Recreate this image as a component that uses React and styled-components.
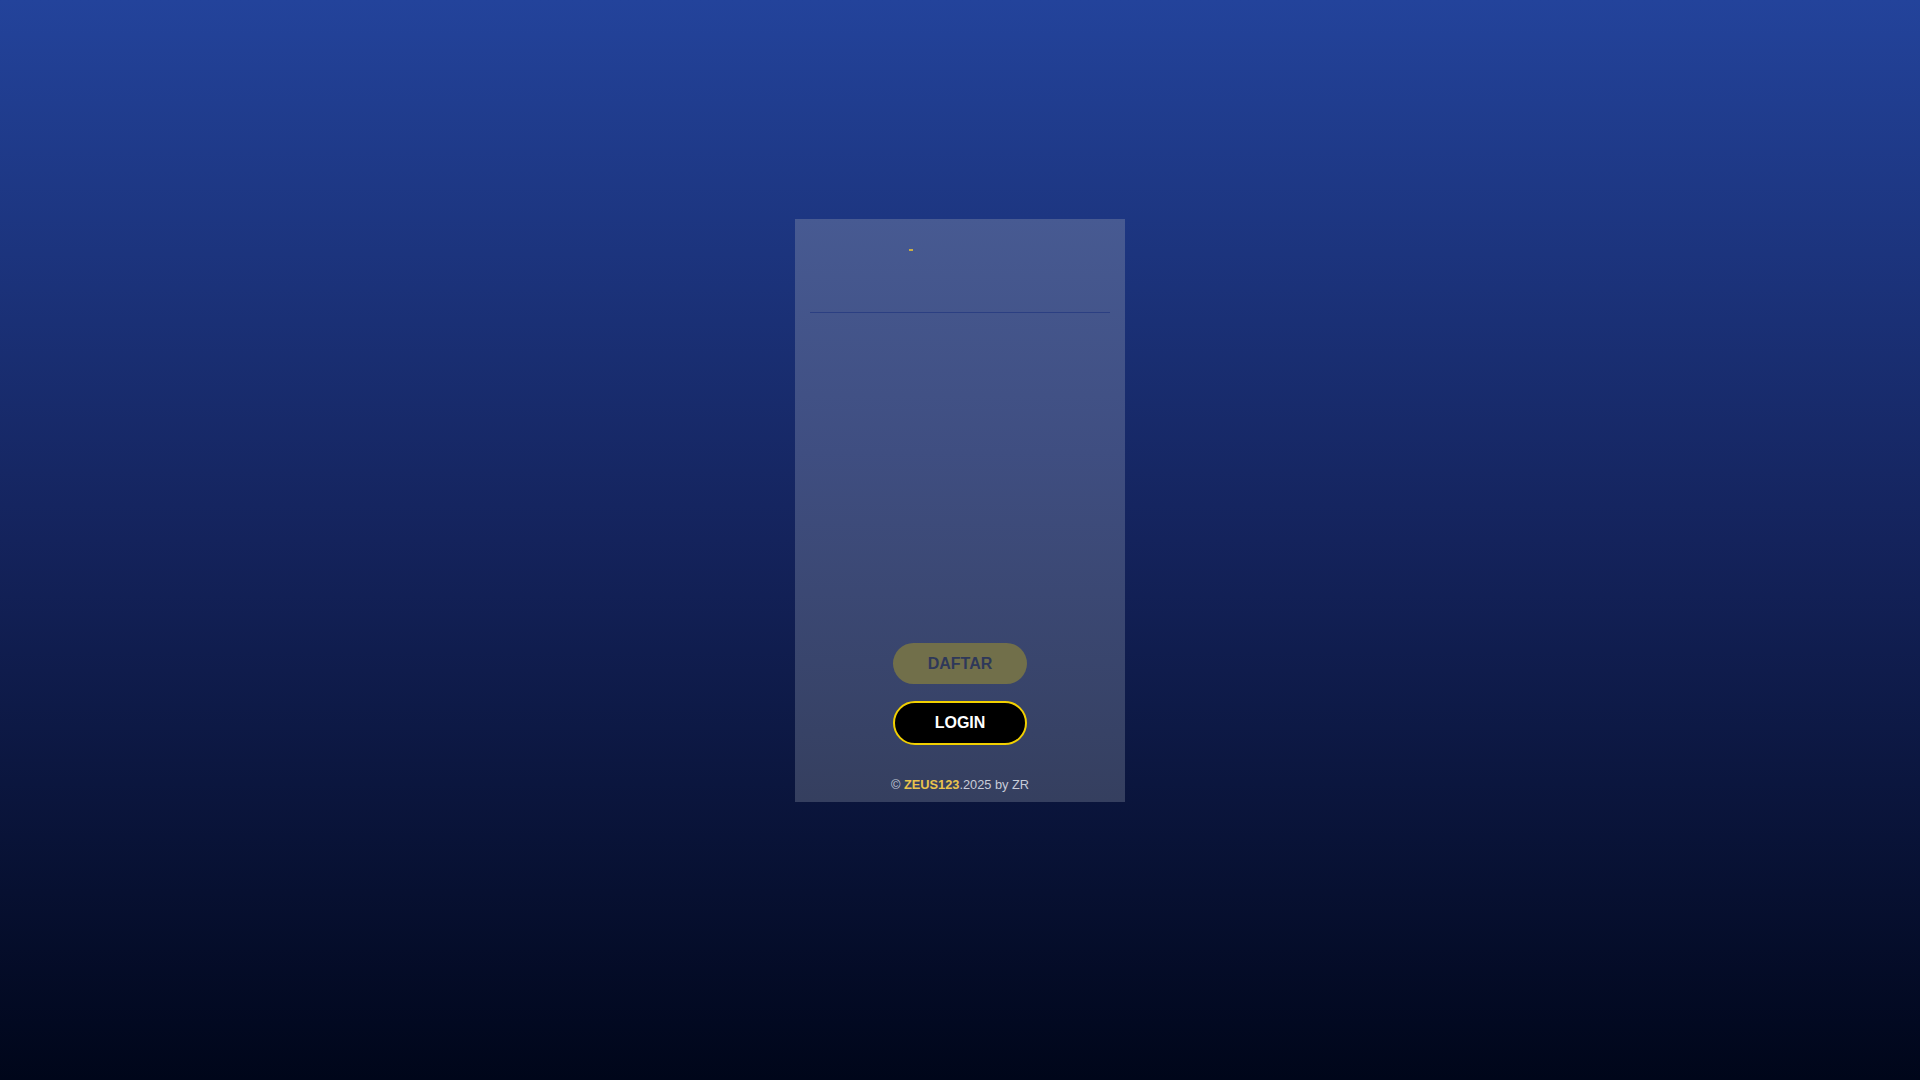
import React from 'react'
import styled, { createGlobalStyle } from 'styled-components';

const GlobalStyle = createGlobalStyle`
    html, body {
        margin: 0;
        padding: 0;
        height: 100%;
    }
    body {
        font-family: "Liberation Sans", Arial, sans-serif;
        background: linear-gradient(180deg, #23439b 0%, #14235c 50%, #00061a 100%);
        min-height: 1080px;
    }
`;

const Page = styled.div`
    display: flex;
    justify-content: center;
    padding-top: 219px;
`;

// main card
const Card = styled.div`
    width: 330px;
    height: 583px;
    box-sizing: border-box;
    padding: 0 15px;
    display: flex;
    flex-direction: column;
    background: linear-gradient(180deg, #475a92 0%, #3f4e81 40%, #353f5f 100%);
`;

// card > header with the logo
const Header = styled.div`
    height: 94px;
    box-sizing: border-box;
    border-bottom: 1px solid #2b3f82;
    padding: 30px 0 0 99px;
`;

const LogoTick = styled.span`
    display: block;
    width: 4px;
    height: 2px;
    background: #c9ad45;
`;

const Banner = styled.div`
    flex: 1;
`;

const Buttons = styled.div`
    display: flex;
    flex-direction: column;
    align-items: center;
    gap: 17px;
`;

const Button = styled.a`
    width: 134px;
    height: ${props => props.$outlined ? '44px' : '41px'};
    box-sizing: border-box;
    border-radius: 22px;
    display: flex;
    align-items: center;
    justify-content: center;
    font-weight: 700;
    font-size: 16px;
    text-decoration: none;
    cursor: pointer;
    background: ${props => props.$outlined ? '#000' : '#716f4a'};
    color: ${props => props.$outlined ? '#fff' : '#2e3859'};
    border: ${props => props.$outlined ? '2px solid #f2d000' : 'none'};
`;

const Footer = styled.div`
    text-align: center;
    font-size: 12.8px;
    color: #c8ccd8;
    padding: 32px 0 10px;
`;

const Brand = styled.b`
    color: #e9c34c;
`;

const App = () => {
  return (
    <>
      <GlobalStyle />
      <Page>
        <Card>
          <Header>
            <LogoTick />
          </Header>
          <Banner />
          <Buttons>
            <Button>DAFTAR</Button>
            <Button $outlined>LOGIN</Button>
          </Buttons>
          <Footer>
            © <Brand>ZEUS123</Brand>.2025 by ZR
          </Footer>
        </Card>
      </Page>
    </>
  )
}

export default App
